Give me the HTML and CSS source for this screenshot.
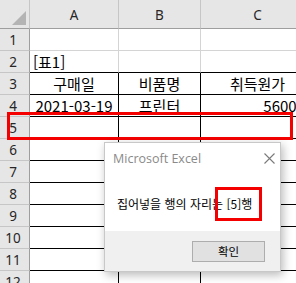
FILE: index.html
```html
<!DOCTYPE html>
<html lang="ko">
<head>
  <meta charset="UTF-8" />
  <title>행 삽입</title>
  <link rel="stylesheet" href="styles.css">
</head>
<body>
  <div id="sheet">
    <div class="grid">
      <div class="corner"><span class="tri"></span></div>
      <div class="colhead">A</div>
      <div class="colhead">B</div>
      <div class="colhead">C</div>

      <div class="rowhead">1</div>
      <div class="cell"></div><div class="cell"></div><div class="cell"></div>

      <div class="rowhead">2</div>
      <div class="cell left under">[표1]</div><div class="cell under"></div><div class="cell under"></div>

      <div class="rowhead">3</div>
      <div class="cell tb center">구매일</div><div class="cell tb center">비품명</div><div class="cell tb center">취득원가</div>

      <div class="rowhead">4</div>
      <div class="cell tb center">2021-03-19</div><div class="cell tb center">프린터</div><div class="cell tb right">56000</div>

      <div class="rowhead">5</div>
      <div class="cell tb"></div><div class="cell tb"></div><div class="cell tb"></div>
      <div class="rowhead">6</div>
      <div class="cell tb"></div><div class="cell tb"></div><div class="cell tb"></div>
      <div class="rowhead">7</div>
      <div class="cell tb"></div><div class="cell tb"></div><div class="cell tb"></div>
      <div class="rowhead">8</div>
      <div class="cell tb"></div><div class="cell tb"></div><div class="cell tb"></div>
      <div class="rowhead">9</div>
      <div class="cell tb"></div><div class="cell tb"></div><div class="cell tb"></div>
      <div class="rowhead">10</div>
      <div class="cell tb"></div><div class="cell tb"></div><div class="cell tb"></div>
      <div class="rowhead">11</div>
      <div class="cell tb"></div><div class="cell tb"></div><div class="cell tb"></div>
      <div class="rowhead">12</div>
      <div class="cell tb"></div><div class="cell tb"></div><div class="cell tb"></div>
    </div>

    <div class="mark mark-row"></div>

    <div class="dialog">
      <div class="dlg-title">
        <span>Microsoft Excel</span>
        <svg class="close" width="11" height="11" viewBox="0 0 11 11">
          <path d="M0.5 0.5 L10.5 10.5 M10.5 0.5 L0.5 10.5" stroke="#7a7a7a" stroke-width="1.1" fill="none"/>
        </svg>
      </div>
      <div class="dlg-body">집어넣을 행의 자리는 [5]행</div>
      <div class="dlg-foot">
        <button class="ok">확인</button>
      </div>
    </div>

    <div class="mark mark-text"></div>
  </div>
</body>
</html>
```

FILE: styles.css
```css
body {
  margin: 0;
  background: #fff;
}
#sheet {
  position: relative;
  width: 296px;
  height: 283px;
  overflow: hidden;
  font-family: "Noto Sans CJK KR", "Noto Sans", sans-serif;
}
.grid {
  display: grid;
  grid-template-columns: 30px 89px 82px 114px;
  grid-template-rows: 29px repeat(12, 22px);
}
.grid > div {
  box-sizing: border-box;
  border-right: 1px solid #d4d4d4;
  border-bottom: 1px solid #d4d4d4;
  display: flex;
  align-items: center;
  white-space: nowrap;
  overflow: hidden;
}
.corner {
  background: #e6e6e6;
  position: relative;
}
.tri {
  position: absolute;
  left: 12px;
  top: 11px;
  width: 0;
  height: 0;
  border-left: 14px solid transparent;
  border-bottom: 14px solid #b4b4b4;
}
.grid > .corner,
.grid > .colhead {
  border-bottom-color: #9e9e9e;
  border-right-color: #c6c6c6;
}
.colhead {
  background: #e6e6e6;
  justify-content: center;
  font-family: "Noto Sans", sans-serif;
  font-size: 13.5px;
  color: #262626;
  padding-top: 1px;
}
.grid > .rowhead {
  background: #e6e6e6;
  justify-content: center;
  font-family: "Noto Sans", sans-serif;
  font-size: 13.5px;
  color: #262626;
  border-right-color: #9e9e9e;
  border-bottom-color: #c6c6c6;
  padding-right: 3px;
}
.cell {
  font-size: 15px;
  color: #000;
  padding: 0 3px;
}
.grid > .under {
  border-bottom-color: #000;
}
.grid > .tb {
  border-right-color: #000;
  border-bottom-color: #000;
}
.center {
  justify-content: center;
}
.grid > .right {
  justify-content: flex-end;
  padding-right: 9px;
}
.left {
  justify-content: flex-start;
}
.mark {
  position: absolute;
  box-sizing: border-box;
  border: 3px solid #f50000;
}
.mark-row {
  left: 7px;
  top: 112px;
  width: 286px;
  height: 28px;
}
.mark-text {
  left: 215px;
  top: 187px;
  width: 47px;
  height: 34px;
}
.dialog {
  position: absolute;
  left: 104px;
  top: 142px;
  width: 177px;
  height: 130px;
  box-sizing: border-box;
  background: #fff;
  border: 1px solid #c8c8c8;
  box-shadow: 2px 3px 9px rgba(0, 0, 0, 0.28);
  display: flex;
  flex-direction: column;
}
.dlg-title {
  height: 30px;
  display: flex;
  align-items: center;
  justify-content: space-between;
  padding: 0 5px 0 8px;
  font-family: "Open Sans", "Noto Sans", sans-serif;
  font-size: 12.5px;
  color: #8a8a8a;
}
.dlg-body {
  flex: 1;
  display: flex;
  align-items: center;
  padding: 3px 0 0 12px;
  font-size: 12px;
  color: #000;
}
.dlg-foot {
  height: 40px;
  background: #f0f0f0;
  display: flex;
  align-items: center;
  justify-content: flex-end;
  padding-right: 15px;
}
.ok {
  width: 73px;
  height: 21px;
  background: #e1e1e1;
  border: 1px solid #adadad;
  font-family: "Noto Sans CJK KR", sans-serif;
  font-size: 11.5px;
  color: #000;
  padding: 0;
}
```
